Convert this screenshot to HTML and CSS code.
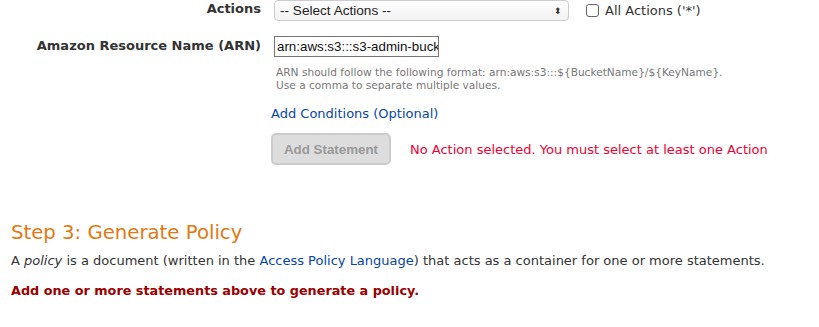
FILE: index.html
```html
<!DOCTYPE html>
<html>
<head>
	<meta charset="utf-8">
	<title>AWS Policy Generator</title>
	<link rel="stylesheet" href="styles.css">
</head>
<body>
	<div class="page">
		<div class="form-row first">
			<label class="label">Actions</label>
			<div class="field inline">
				<div class="select">
					<span>-- Select Actions --</span>
					<span class="arrows">&#x2B0D;</span>
				</div>
				<label class="check"><span class="box"></span>All Actions ('*')</label>
			</div>
		</div>

		<div class="form-row arn">
			<label class="label">Amazon Resource Name (ARN)</label>
			<div class="field">
				<div class="text-input">arn:aws:s3:::s3-admin-buck</div>
				<p class="help">ARN should follow the following format: arn:aws:s3:::${BucketName}/${KeyName}.<br>Use a comma to separate multiple values.</p>
			</div>
		</div>

		<div class="form-row">
			<div></div>
			<div class="field actions">
				<a class="link conditions" href="#">Add Conditions (Optional)</a>
				<div class="submit-row">
					<button class="btn-disabled" disabled>Add Statement</button>
					<span class="error">No Action selected. You must select at least one Action</span>
				</div>
			</div>
		</div>

		<h2 class="step">Step 3: Generate Policy</h2>
		<p class="intro">A <em>policy</em> is a document (written in the <a class="link" href="#">Access Policy Language</a>) that acts as a container for one or more statements.</p>
		<p class="notice">Add one or more statements above to generate a policy.</p>
	</div>
</body>
</html>
```

FILE: styles.css
```css
*{
	margin: 0;
	padding: 0;
	box-sizing: border-box;
}
body{
	font-family: "DejaVu Sans", Verdana, sans-serif;
	font-size: 12px;
	color: #333;
	background: #fff;
}
.page{
	padding: 0 11px;
}
.form-row{
	display: grid;
	grid-template-columns: 250px 1fr;
	column-gap: 13px;
}
.label{
	text-align: right;
	font-weight: bold;
	font-size: 13px;
	color: #333;
	padding-top: 1px;
}
.field.inline{
	display: flex;
	align-items: center;
	gap: 17px;
}
.select{
	width: 295px;
	height: 21px;
	border: 1px solid #ccc;
	border-radius: 4px;
	background: linear-gradient(#fff, #f2f2f2);
	display: flex;
	align-items: center;
	justify-content: space-between;
	padding: 0 6px 0 5px;
	font-family: "Liberation Sans", Arial, sans-serif;
	font-size: 13.6px;
	color: #222;
}
.arrows{
	font-size: 9px;
	color: #333;
}
.check{
	display: flex;
	align-items: center;
	gap: 6px;
	font-size: 13px;
	color: #333;
}
.box{
	width: 13px;
	height: 13px;
	border: 1px solid #666;
	border-radius: 3px;
	background: #fff;
}
.arn{
	margin-top: 15px;
}
.arn .label{
	padding-top: 2px;
}
.text-input{
	width: 165px;
	height: 21px;
	border: 1px solid #767676;
	padding: 1px 2px;
	font-family: "Liberation Sans", Arial, sans-serif;
	font-size: 13.33px;
	line-height: 17px;
	color: #111;
	white-space: nowrap;
	overflow: hidden;
}
.help{
	margin: 9px 0 0 2px;
	font-size: 10.6px;
	line-height: 13px;
	color: #777;
}
.actions{
	margin-top: 14px;
	margin-left: -3px;
}
.link{
	color: #0645ad;
	text-decoration: none;
}
.conditions{
	font-size: 13px;
	display: block;
}
.submit-row{
	display: flex;
	align-items: center;
	gap: 19px;
	margin-top: 12px;
}
.btn-disabled{
	width: 120px;
	height: 32px;
	border: 2px solid #ccc;
	border-radius: 5px;
	background: #ddd;
	color: #999;
	font-family: "Liberation Sans", Arial, sans-serif;
	font-weight: bold;
	font-size: 13.33px;
}
.error{
	color: #f00033;
	font-size: 13px;
}
.step{
	margin-top: 56px;
	font-weight: normal;
	font-size: 19.7px;
	color: #e47911;
}
.intro{
	margin-top: 9px;
	font-size: 13px;
}
.notice{
	margin-top: 15px;
	font-weight: bold;
	font-size: 12.8px;
	color: #990000;
}
```
